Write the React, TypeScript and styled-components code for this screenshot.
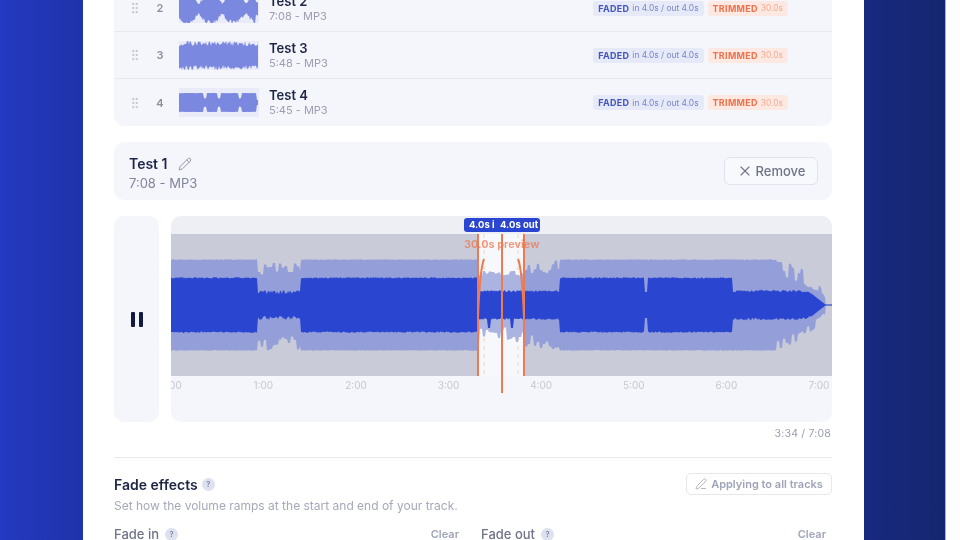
import React from "react";
import styled, { createGlobalStyle } from "styled-components";
import { GripVertical, Pencil, PenLine, X } from "lucide-react";

const GlobalStyle = createGlobalStyle`
  html, body {
    margin: 0;
    padding: 0;
    background: #fff;
    font-family: Inter, "Liberation Sans", sans-serif;
  }
`;

const Page = styled.div`
  display: flex;
  width: 960px;
  height: 540px;
  overflow: hidden;
  filter: blur(0.45px);
`;

const Stage = styled.div`
  width: 945px;
  height: 540px;
  flex: none;
  padding-left: 83px;
  background: linear-gradient(90deg, #2339c1 0%, #1f32a6 10%, #182a82 90%, #15266f 100%);
  box-sizing: border-box;
`;

const Card = styled.main`
  width: 781px;
  height: 540px;
  padding: 0 32px 0 31px;
  box-sizing: border-box;
  background: #fff;
  overflow: hidden;
`;

const SideStrip = styled.div`
  flex: 1;
  border-left: 1px solid #9db2f2;
  background: #fdfdff;
`;

const TrackList = styled.section`
  margin-top: -15px;
  background: #f5f6fb;
  border-radius: 10px;
`;

const TrackRow = styled.div`
  display: flex;
  align-items: center;
  height: 47px;
  box-sizing: border-box;
  padding-left: 14px;
  border-bottom: 1px solid #e8e9f0;

  &:last-child {
    border-bottom: none;
  }
`;

const Grip = styled(GripVertical)`
  flex: none;
  width: 14px;
  height: 14px;
  color: #c6c9d4;
`;

const TrackNumber = styled.span`
  width: 20px;
  margin-left: 8px;
  text-align: center;
  font-size: 11px;
  font-weight: 600;
  color: #8b8fa3;
`;

const ThumbBox = styled.div`
  width: 80px;
  height: 29px;
  margin-left: 9px;
  flex: none;
  background: #e9ecf8;
`;

const TrackText = styled.div`
  display: flex;
  flex-direction: column;
  margin-left: 10px;
  flex: 1;
`;

const TrackTitle = styled.span`
  font-size: 13px;
  line-height: 15px;
  font-weight: 600;
  color: #1e2545;
`;

const TrackMeta = styled.span`
  font-size: 11px;
  line-height: 14px;
  color: #9a9eb0;
`;

const Badges = styled.div`
  display: flex;
  gap: 4px;
  margin-right: 44px;
`;

const Badge = styled.span<{ $tone: "blue" | "orange" }>`
  display: flex;
  align-items: center;
  gap: 3px;
  height: 15px;
  padding: 0 5px;
  border-radius: 3px;
  font-size: 8.4px;
  background: ${p => (p.$tone === "blue" ? "#e6e9f7" : "#fde9e2")};
  color: ${p => (p.$tone === "blue" ? "#7985c9" : "#f5ab92")};

  b {
    font-size: 9px;
    font-weight: 700;
    letter-spacing: 0.3px;
    color: ${p => (p.$tone === "blue" ? "#4454c0" : "#f0714a")};
  }
`;

const DetailBar = styled.section`
  display: flex;
  align-items: center;
  justify-content: space-between;
  height: 58px;
  margin-top: 16px;
  padding: 0 14px 0 15px;
  box-sizing: border-box;
  background: #f5f6fb;
  border-radius: 10px;
`;

const DetailText = styled.div`
  display: flex;
  flex-direction: column;
  gap: 2px;
  padding-top: 4px;
`;

const DetailTitle = styled.div`
  display: flex;
  align-items: center;
  gap: 10px;
  font-size: 14px;
  line-height: 18px;
  font-weight: 600;
  color: #1e2545;
`;

const EditIcon = styled(Pencil)`
  width: 14px;
  height: 14px;
  color: #85899c;
`;

const DetailMeta = styled.span`
  font-size: 13px;
  line-height: 16px;
  color: #80859a;
`;

const RemoveButton = styled.button`
  display: flex;
  align-items: center;
  justify-content: center;
  gap: 3px;
  width: 94px;
  height: 28px;
  padding: 0;
  border: 1px solid #e1e3ec;
  border-radius: 6px;
  background: #f8f9fc;
  font: 500 13px Inter, sans-serif;
  color: #6f7488;

  svg {
    width: 16px;
    height: 16px;
  }
`;

const PlayerRow = styled.section`
  display: flex;
  gap: 12px;
  height: 206px;
  margin-top: 16px;
`;

const PausePanel = styled.div`
  display: flex;
  align-items: center;
  justify-content: center;
  gap: 4px;
  width: 45px;
  flex: none;
  padding-top: 1px;
  box-sizing: border-box;
  background: #f5f6fb;
  border-radius: 10px;
`;

const PauseBar = styled.span`
  width: 4px;
  height: 15px;
  background: #141b42;
  border-radius: 1px;
`;

const WavePanel = styled.div`
  position: relative;
  flex: 1;
  overflow: hidden;
  border-radius: 10px;
  background: #f5f6fb;
`;

const WaveHead = styled.div`
  height: 18px;
  background: #eeeff5;
`;

const WaveSvg = styled.svg`
  display: block;
  width: 661px;
  height: 142px;
`;

const Ruler = styled.div`
  display: flex;
  margin: 2px 0 0 -46.5px;
`;

const Tick = styled.span`
  width: 92.6px;
  flex: none;
  text-align: center;
  font-size: 10px;
  line-height: 14px;
  color: #c4c7d2;
`;

const Playhead = styled.div`
  position: absolute;
  left: 330px;
  top: 18px;
  width: 2px;
  height: 159px;
  background: #ee7a52;
`;

const FadeTags = styled.div`
  position: absolute;
  left: 293px;
  top: 2px;
  display: flex;
  width: 76px;
  height: 14px;
  border-radius: 3px;
  overflow: hidden;
  background: #2a46d0;
`;

const FadeTag = styled.span<{ $w: number; $pad: number }>`
  width: ${p => p.$w}px;
  flex: none;
  overflow: hidden;
  padding-left: ${p => p.$pad}px;
  box-sizing: border-box;
  white-space: nowrap;
  font-size: 9.5px;
  line-height: 14px;
  font-weight: 700;
  color: #fff;
`;

const PreviewLabel = styled.span`
  position: absolute;
  left: 293px;
  top: 21px;
  white-space: nowrap;
  font-size: 11px;
  line-height: 14px;
  font-weight: 600;
  color: rgba(238, 122, 82, 0.8);
`;

const TimeLabel = styled.div`
  margin: 5px 1px 0 0;
  text-align: right;
  font-size: 10.5px;
  line-height: 14px;
  letter-spacing: 0.2px;
  color: #9a9eb0;
`;

const Divider = styled.hr`
  height: 1px;
  margin: 16px 0 0;
  border: none;
  background: #e8e9ef;
`;

const SectionHead = styled.div`
  display: flex;
  justify-content: space-between;
  align-items: center;
  height: 22px;
  margin-top: 15px;
`;

const HeadTitle = styled.h3<{ $small?: boolean }>`
  display: flex;
  align-items: center;
  gap: ${p => (p.$small ? 6 : 4)}px;
  margin: 0;
  font-size: ${p => (p.$small ? 13 : 14)}px;
  font-weight: ${p => (p.$small ? 500 : 600)};
  color: ${p => (p.$small ? "#6f7488" : "#1e2545")};
`;

const HelpDot = styled.span`
  display: inline-flex;
  align-items: center;
  justify-content: center;
  width: 13px;
  height: 13px;
  border-radius: 50%;
  background: #dde1f0;
  font-size: 7.5px;
  font-weight: 600;
  color: #7d84a3;
`;

const ApplyButton = styled.button`
  display: flex;
  align-items: center;
  justify-content: center;
  gap: 4px;
  width: 146px;
  height: 22px;
  padding: 0;
  border: 1px solid #e6e7ee;
  border-radius: 5px;
  background: #fff;
  font: 600 11px Inter, sans-serif;
  color: #a0a4b8;

  svg {
    width: 12px;
    height: 12px;
  }
`;

const SectionNote = styled.p`
  margin: 3px 0 0;
  font-size: 12px;
  line-height: 16px;
  color: #a5a9b8;
`;

const FadeColumns = styled.div`
  display: grid;
  grid-template-columns: 345px 345px;
  column-gap: 22px;
  margin-top: 12px;
`;

const FadeColumn = styled.div`
  display: flex;
  justify-content: space-between;
  align-items: center;
`;

const ClearLink = styled.span`
  font-size: 11px;
  font-weight: 600;
  color: #a0a4b8;
`;

// small seeded random so the waves come out the same each load
const seeded = (seed: number) => () => {
  seed = (seed + 0x6d2b79f5) | 0;
  let t = Math.imul(seed ^ (seed >>> 15), 1 | seed);
  t = (t + Math.imul(t ^ (t >>> 7), 61 | t)) ^ t;
  return ((t ^ (t >>> 14)) >>> 0) / 4294967296;
};

const CENTER = 71;

const band = (tops: number[], bottoms: number[]) => {
  const up = tops.map((a, i) => `${i},${(CENTER - a).toFixed(1)}`);
  const down = bottoms.map((a, i) => `${i},${(CENTER + a).toFixed(1)}`).reverse();
  return `M${up.join("L")}L${down.join("L")}Z`;
};

// x is in page pixels, the panel starts at 171; spike changes every 3px
const lightAmp = (x: number, r: () => number, spike: number, side: number) => {
  if (x < 258) return 45 + r() * 0.8;
  if (x < 301) return 30 + spike * 16;
  if (x < 478) return 45 + r() * 0.8;
  if (x < 525) {
    const base = side < 0 ? 29 : 22;
    return base + spike * (side < 0 ? 5 : 17);
  }
  if (x < 560) return 28 + spike * 14 + (x - 525) * 0.1;
  if (x < 777) return 45 + r() * 0.8;
  if (x < 826) {
    const t = (x - 777) / 49;
    return Math.max(1, (45 - t * t * 28 - t * 6) * (0.55 + spike * 0.5));
  }
  return 0.6;
};

const darkAmp = (x: number, r: () => number, side: number) => {
  if (x < 258) return 26.5 + r() * 1.4;
  if (x < 301) return 11 + r() * 4;
  if (x < 478) return 26.5 + r() * 1.4;
  if (x < 560) {
    if (side > 0 && ((x > 487 && x < 491) || (x > 510 && x < 514))) return 23;
    return 13 + r() * 2;
  }
  if (x >= 645 && x <= 647) return 13;
  if (x < 733) return 26.5 + r() * 1.4;
  if (x < 812) return 13 + r() * 2.5 - Math.max(0, x - 795) * 0.12;
  if (x < 826) return Math.max(0.7, 11 * (1 - (x - 812) / 14));
  return 0.6;
};

const MainWave = () => {
  const r = seeded(41);
  const xs = Array.from({ length: 662 }, (_, i) => 171 + i);
  const spikes = () => Array.from({ length: 230 }, () => r());
  const up = spikes();
  const down = spikes();
  const light = band(
    xs.map((x, i) => lightAmp(x, r, up[Math.floor(i / 3)], -1)),
    xs.map((x, i) => lightAmp(x, r, down[Math.floor(i / 3)], 1)),
  );
  const dark = band(xs.map(x => darkAmp(x, r, -1)), xs.map(x => darkAmp(x, r, 1)));
  return (
    <WaveSvg viewBox="0 0 661 142">
      <rect width="661" height="142" fill="#c9cbd8" />
      <rect x="307" width="47" height="142" fill="#f5f6fb" />
      <line x1="313" y1="0" x2="313" y2="142" stroke="#f6c9b7" strokeWidth="1.2" strokeDasharray="4 4" />
      <line x1="347" y1="0" x2="347" y2="142" stroke="#f6c9b7" strokeWidth="1.2" strokeDasharray="4 4" />
      <path d={light} fill="#949fd9" />
      <rect x="307" y="0" width="47" height="142" fill="#fff" opacity="0.22" />
      <path d={dark} fill="#2a46d0" />
      <path d="M313 25C310 32 308 58 307 84" fill="none" stroke="#ee7a52" strokeWidth="2" />
      <path d="M347 25C350 32 352 58 353 84" fill="none" stroke="#ee7a52" strokeWidth="2" />
      <line x1="307" y1="0" x2="307" y2="142" stroke="#ee7a52" strokeWidth="2" />
      <line x1="353" y1="0" x2="353" y2="142" stroke="#ee7a52" strokeWidth="2" />
    </WaveSvg>
  );
};

type ThumbKind = "lobes" | "spiky" | "blocks";

const thumbAmp = (kind: ThumbKind, x: number, r: () => number) => {
  if (kind === "lobes") {
    const lobe = Math.abs(Math.sin((x / 80) * Math.PI * 3.4 + 0.5));
    return Math.max(1, (5 + lobe * 10) * (0.75 + r() * 0.4) * (x > 76 ? 0.5 : 1));
  }
  if (kind === "spiky") return 9 + r() * 5.5 + Math.abs(Math.sin(x / 9)) * 0.6;
  if (x > 77) return 2.5;
  const dip = [26, 40, 61].some(d => Math.abs(x - d) < 1.5);
  return (dip ? 4 : 9.2) + r() * 0.4;
};

const Thumb = ({ kind, seed }: { kind: ThumbKind; seed: number }) => {
  const r = seeded(seed);
  const xs = Array.from({ length: 80 }, (_, i) => i);
  const top = xs.map(x => thumbAmp(kind, x, r));
  const bottom = xs.map(x => thumbAmp(kind, x, r));
  const d = `M${top.map((a, i) => `${i},${(14.5 - a).toFixed(1)}`).join("L")}L${bottom
    .map((a, i) => `${i},${(14.5 + a).toFixed(1)}`)
    .reverse()
    .join("L")}Z`;
  return (
    <ThumbBox>
      <svg width="80" height="29" viewBox="0 0 80 29" style={{ display: "block" }}>
        <path d={d} fill="#7b88df" />
      </svg>
    </ThumbBox>
  );
};

const tracks: { n: number; title: string; meta: string; kind: ThumbKind }[] = [
  { n: 2, title: "Test 2", meta: "7:08 - MP3", kind: "lobes" },
  { n: 3, title: "Test 3", meta: "5:48 - MP3", kind: "spiky" },
  { n: 4, title: "Test 4", meta: "5:45 - MP3", kind: "blocks" },
];

const ticks = ["0:00", "1:00", "2:00", "3:00", "4:00", "5:00", "6:00", "7:00"];

export default function App() {
  return (
    <>
      <GlobalStyle />
      <Page>
        <Stage>
          <Card>
            <TrackList>
              {tracks.map(track => (
                <TrackRow key={track.n}>
                  <Grip />
                  <TrackNumber>{track.n}</TrackNumber>
                  <Thumb kind={track.kind} seed={track.n * 17} />
                  <TrackText>
                    <TrackTitle>{track.title}</TrackTitle>
                    <TrackMeta>{track.meta}</TrackMeta>
                  </TrackText>
                  <Badges>
                    <Badge $tone="blue">
                      <b>FADED</b> in 4.0s / out 4.0s
                    </Badge>
                    <Badge $tone="orange">
                      <b>TRIMMED</b> 30.0s
                    </Badge>
                  </Badges>
                </TrackRow>
              ))}
            </TrackList>

            <DetailBar>
              <DetailText>
                <DetailTitle>
                  Test 1 <EditIcon strokeWidth={1.5} />
                </DetailTitle>
                <DetailMeta>7:08 - MP3</DetailMeta>
              </DetailText>
              <RemoveButton>
                <X strokeWidth={1.7} /> Remove
              </RemoveButton>
            </DetailBar>

            <PlayerRow>
              <PausePanel>
                <PauseBar />
                <PauseBar />
              </PausePanel>
              <WavePanel>
                <WaveHead />
                <MainWave />
                <Ruler>
                  {ticks.map(t => (
                    <Tick key={t}>{t}</Tick>
                  ))}
                </Ruler>
                <Playhead />
                <FadeTags>
                  <FadeTag $w={29.5} $pad={5}>4.0s in</FadeTag>
                  <FadeTag $w={46.5} $pad={6.5}>4.0s out</FadeTag>
                </FadeTags>
                <PreviewLabel>30.0s preview</PreviewLabel>
              </WavePanel>
            </PlayerRow>

            <TimeLabel>3:34 / 7:08</TimeLabel>
            <Divider />

            <SectionHead>
              <HeadTitle>
                Fade effects <HelpDot>?</HelpDot>
              </HeadTitle>
              <ApplyButton>
                <PenLine strokeWidth={1.6} /> Applying to all tracks
              </ApplyButton>
            </SectionHead>
            <SectionNote>Set how the volume ramps at the start and end of your track.</SectionNote>

            <FadeColumns>
              <FadeColumn>
                <HeadTitle $small>
                  Fade in <HelpDot>?</HelpDot>
                </HeadTitle>
                <ClearLink>Clear</ClearLink>
              </FadeColumn>
              <FadeColumn>
                <HeadTitle $small>
                  Fade out <HelpDot>?</HelpDot>
                </HeadTitle>
                <ClearLink>Clear</ClearLink>
              </FadeColumn>
            </FadeColumns>
          </Card>
        </Stage>
        <SideStrip />
      </Page>
    </>
  );
}
